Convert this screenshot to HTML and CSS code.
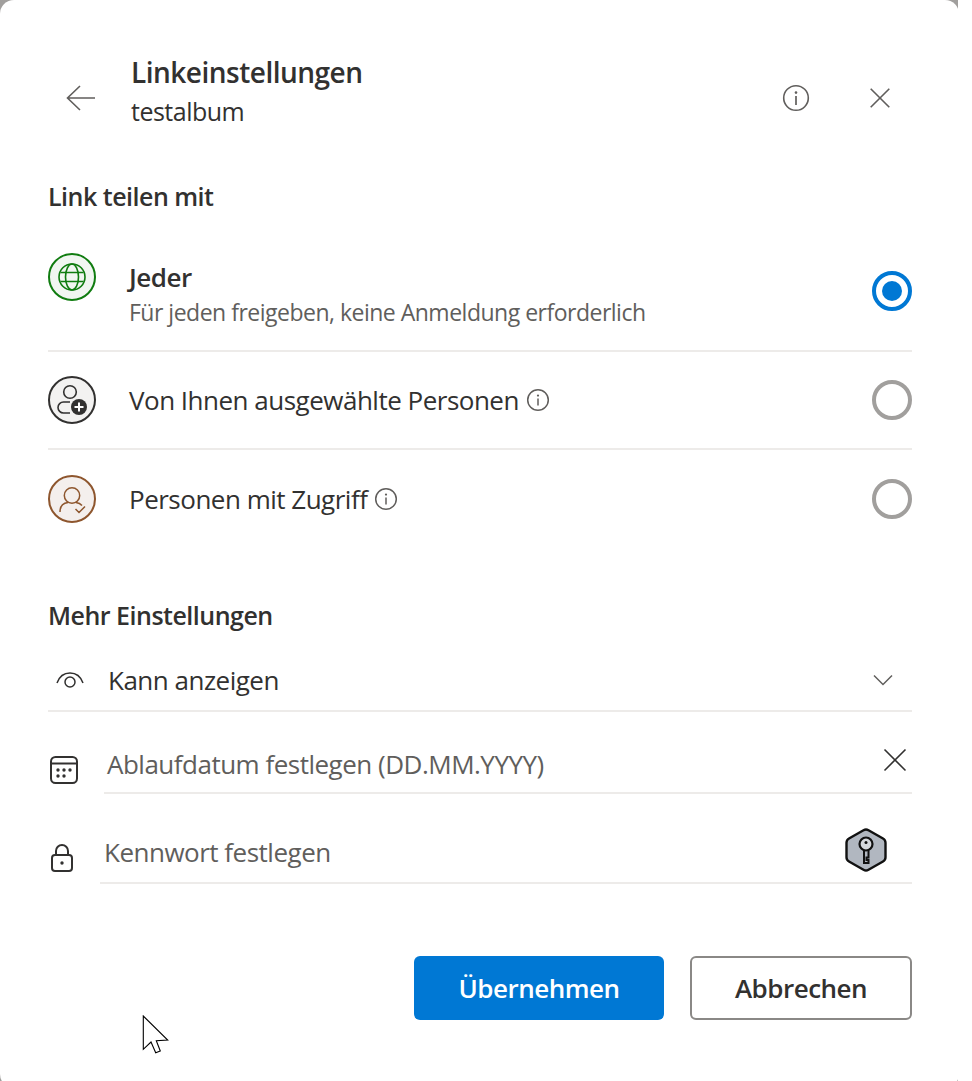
FILE: index.html
```html
<!DOCTYPE html>
<html lang="de">
<head>
    <meta charset="UTF-8">
    <meta name="viewport" content="width=device-width, initial-scale=1.0">
    <title>Linkeinstellungen</title>
    <link rel="stylesheet" href="styles.css">
</head>
<body>

<div class="backdrop">
    <div class="dialog">
        <div class="header">
            <svg class="back-icon" width="30" height="26" viewBox="0 0 30 26"><path d="M14 1 1.5 13 14 25M1.5 13H29" fill="none" stroke="#605e5c" stroke-width="1.6"/></svg>
            <div class="header-text">
                <div class="title">Linkeinstellungen</div>
                <div class="subtitle">testalbum</div>
            </div>
            <svg class="head-info" width="28" height="28" viewBox="0 0 28 28"><circle cx="14" cy="14" r="12.3" fill="none" stroke="#605e5c" stroke-width="1.6"/><circle cx="14" cy="8.6" r="1.3" fill="#605e5c"/><path d="M14 12v9" stroke="#605e5c" stroke-width="1.7"/></svg>
            <svg class="head-close" width="20" height="20" viewBox="0 0 20 20"><path d="M.7.7l18.6 18.6M19.3.7.7 19.3" stroke="#605e5c" stroke-width="1.6"/></svg>
        </div>

        <div class="section-title">Link teilen mit</div>

        <div class="option option-first">
            <div class="option-icon icon-green">
                <svg width="44" height="44" viewBox="0 0 44 44" fill="none" stroke="#107c10" stroke-width="1.6"><circle cx="22" cy="22" r="13"/><ellipse cx="22" cy="22" rx="6.5" ry="13"/><path d="M10.5 17.5h23M10.5 26.500h23"/></svg>
            </div>
            <div class="option-text">
                <div class="option-name">Jeder</div>
                <div class="option-desc">Für jeden freigeben, keine Anmeldung erforderlich</div>
            </div>
            <div class="radio radio-on"></div>
        </div>
        <div class="option">
            <div class="option-icon icon-dark">
                <svg width="44" height="44" viewBox="0 0 44 44" fill="none" stroke="#323130" stroke-width="1.6"><circle cx="20" cy="14" r="6.300"/><path d="M20 24h-6.500a5.500 5.500 0 0 0 0 11H20"/><circle cx="29" cy="29" r="8" fill="#323130" stroke="none"/><path d="M29 24.500v9M24.500 29h9" stroke="#fff" stroke-width="2"/></svg>
            </div>
            <div class="option-label">Von Ihnen ausgewählte Personen</div>
            <svg class="small-info" width="24" height="24" viewBox="0 0 24 24"><circle cx="12" cy="12" r="10.300" fill="none" stroke="#605e5c" stroke-width="1.500"/><circle cx="12" cy="7.600" r="1.100" fill="#605e5c"/><path d="M12 10.500v7" stroke="#605e5c" stroke-width="1.500"/></svg>
            <div class="radio"></div>
        </div>
        <div class="option option-last">
            <div class="option-icon icon-brown">
                <svg width="44" height="44" viewBox="0 0 44 44" fill="none" stroke="#8e562e" stroke-width="1.500"><circle cx="22" cy="18.500" r="7.700"/><path d="M10 35c0-6 3-9 8-9.500M26 25.500c2.500.3 4.500 1.200 6 3M25.500 32l3.500 3.500 6-6"/></svg>
            </div>
            <div class="option-label">Personen mit Zugriff</div>
            <svg class="small-info" width="24" height="24" viewBox="0 0 24 24"><circle cx="12" cy="12" r="10.300" fill="none" stroke="#605e5c" stroke-width="1.500"/><circle cx="12" cy="7.600" r="1.100" fill="#605e5c"/><path d="M12 10.500v7" stroke="#605e5c" stroke-width="1.500"/></svg>
            <div class="radio"></div>
        </div>

        <div class="section-title section-more">Mehr Einstellungen</div>

        <div class="permission">
            <svg class="eye-icon" width="28" height="18" viewBox="0 0 28 18" fill="none" stroke="#323130" stroke-width="1.500"><path d="M1 12C3.500 5 8 2 14 2s10.500 3 13 10"/><circle cx="14" cy="11" r="5"/></svg>
            <div class="permission-label">Kann anzeigen</div>
            <svg class="chevron" width="20" height="12" viewBox="0 0 20 12"><path d="M1 1.500l9 9 9-9" fill="none" stroke="#605e5c" stroke-width="1.500"/></svg>
        </div>

        <div class="field-row date-row">
            <svg class="calendar-icon" width="28" height="28" viewBox="0 0 28 28" fill="none"><rect x="1" y="1" width="26" height="26" rx="4.500" stroke="#323130" stroke-width="2"/><path d="M1 7.500h26" stroke="#323130" stroke-width="2"/><g fill="#323130"><circle cx="8" cy="14" r="1.700"/><circle cx="14" cy="14" r="1.700"/><circle cx="20" cy="14" r="1.700"/><circle cx="8" cy="20" r="1.700"/><circle cx="14" cy="20" r="1.700"/></g></svg>
            <div class="field date-field">
                <div class="field-text">Ablaufdatum festlegen (DD.MM.YYYY)</div>
                <svg class="clear-icon" width="24" height="24" viewBox="0 0 24 24"><path d="M1.500 1.500l21 21M22.500 1.500l-21 21" stroke="#323130" stroke-width="1.600"/></svg>
            </div>
        </div>

        <div class="field-row pass-row">
            <svg class="lock-icon" width="22" height="28" viewBox="0 0 22 28" fill="none" stroke="#323130" stroke-width="2"><rect x="1" y="11" width="20" height="16" rx="3"/><path d="M5 11V7a6 6 0 0 1 12 0v4"/><circle cx="11" cy="19" r="1.700" fill="#323130" stroke="none"/></svg>
            <div class="field pass-field">
                <div class="field-text">Kennwort festlegen</div>
                <svg class="key-icon" width="42" height="44" viewBox="0 0 42 44"><path d="M18.500 2.200a5 5 0 0 1 5 0l14.500 8.300a5 5 0 0 1 2.500 4.300v14.400a5 5 0 0 1-2.500 4.300l-14.500 8.300a5 5 0 0 1-5 0L4 33.500a5 5 0 0 1-2.500-4.300V14.800A5 5 0 0 1 4 10.500z" fill="#b1b7c0" stroke="#111" stroke-width="2.400"/><circle cx="21" cy="16" r="6.500" fill="#d5d8dd" stroke="#111" stroke-width="2.200"/><circle cx="21" cy="14.500" r="1.500" fill="#111"/><path d="M19 22.500v12.500h4.500v-3h-2v-2.500h2v-7" fill="none" stroke="#111" stroke-width="2"/></svg>
            </div>
        </div>

        <div class="buttons">
            <button class="btn btn-primary">Übernehmen</button>
            <button class="btn btn-cancel">Abbrechen</button>
        </div>
    </div>
    <svg class="cursor" width="28" height="40" viewBox="0 0 28 40"><path d="M1.300 1v33.300L9 27l4.700 10.700 4.600-1.700-4-10.300 11.400-.7z" fill="#fff" stroke="#000" stroke-width="1.100"/></svg>
</div>

</body>
</html>
```

FILE: styles.css
```css
body {
    margin: 0;
    height: 1081px;
    overflow: hidden;
    background-color: white;
    font-family: "Open Sans", "Noto Sans", sans-serif;
    color: #323130;
}
.backdrop {
    position: relative;
    width: 958px;
    height: 1081px;
    overflow: hidden;
    background-color: #a19f9d;
}
.dialog {
    box-sizing: border-box;
    width: 959px;
    height: 1088px;
    padding: 52px 47px 0 48px;
    background: white;
    border-radius: 14px;
}

/* header */
.header {
    display: flex;
    align-items: center;
    height: 78px;
    margin-bottom: 48px;
}
.back-icon {
    margin-left: 18px;
    margin-top: 14px;
}
.header-text {
    margin-left: 35px;
    flex: 1;
}
.title {
    font-size: 28px;
    font-weight: 600;
    line-height: 40px;
    letter-spacing: -0.5px;
}
.subtitle {
    font-size: 25px;
    line-height: 38px;
    letter-spacing: -0.5px;
}
.head-info {
    margin-top: 14px;
    margin-right: 60px;
}
.head-close {
    margin-top: 14px;
    margin-right: 22px;
}

.section-title {
    font-size: 25px;
    font-weight: 600;
    line-height: 36px;
    letter-spacing: -0.5px;
}
.section-more {
    margin-top: 49px;
}

/* share options */
.option {
    box-sizing: border-box;
    display: flex;
    align-items: center;
    height: 98px;
    border-bottom: 2px solid #edebe9;
}
.option-first {
    align-items: flex-start;
    height: 138px;
    padding-top: 39px;
}
.option-last {
    border-bottom: none;
}
.option-icon {
    box-sizing: border-box;
    display: flex;
    align-items: center;
    justify-content: center;
    flex: none;
    width: 48px;
    height: 48px;
    border: 2px solid;
    border-radius: 50%;
}
.icon-green {
    border-color: #107c10;
    background-color: #f1f6f1;
}
.icon-dark {
    border-color: #323130;
    background-color: #f3f2f1;
}
.icon-brown {
    border-color: #8e562e;
    background-color: #f4efed;
}
.option-text {
    flex: 1;
    margin-left: 33px;
    margin-top: 5px;
}
.option-name {
    font-size: 26px;
    font-weight: 600;
    line-height: 38px;
    letter-spacing: -0.5px;
}
.option-desc {
    font-size: 23px;
    line-height: 32px;
    color: #605e5c;
    letter-spacing: -0.5px;
}
.option-label {
    margin-left: 33px;
    font-size: 26px;
    line-height: 36px;
    letter-spacing: -0.5px;
}
.small-info {
    margin-left: 7px;
    margin-right: auto;
}
.radio {
    box-sizing: border-box;
    flex: none;
    width: 40px;
    height: 40px;
    border: 4px solid #a19f9d;
    border-radius: 50%;
    background: white;
}
.radio-on {
    display: flex;
    align-items: center;
    justify-content: center;
    margin-top: 18px;
    border-color: #0078d4;
}
.radio-on::after {
    content: "";
    width: 20px;
    height: 20px;
    border-radius: 50%;
    background-color: #0078d4;
}

/* more settings */
.permission {
    box-sizing: border-box;
    display: flex;
    align-items: center;
    height: 79px;
    padding: 17px 19px 0 8px;
    border-bottom: 2px solid #edebe9;
}
.eye-icon {
    flex: none;
}
.permission-label {
    flex: 1;
    margin-left: 24px;
    font-size: 26px;
    line-height: 36px;
    letter-spacing: -0.5px;
}
.field-row {
    display: flex;
    align-items: flex-end;
}
.date-row {
    height: 82px;
}
.pass-row {
    height: 90px;
}
.calendar-icon {
    flex: none;
    margin-left: 2px;
    margin-bottom: 10px;
}
.lock-icon {
    flex: none;
    margin-left: 3px;
    margin-bottom: 12px;
}
.field {
    box-sizing: border-box;
    display: flex;
    flex: 1;
    align-items: flex-end;
    justify-content: space-between;
    height: 100%;
    border-bottom: 2px solid #edebe9;
}
.date-field {
    margin-left: 26px;
    padding-left: 3px;
    padding-bottom: 10px;
}
.pass-field {
    margin-left: 27px;
    padding-left: 4px;
    padding-bottom: 12px;
}
.field-text {
    font-size: 26px;
    line-height: 36px;
    color: #605e5c;
    letter-spacing: -0.5px;
}
.clear-icon {
    margin-right: 5px;
    margin-bottom: 10px;
}
.key-icon {
    margin-right: 25px;
    margin-bottom: -2px;
}

/* buttons */
.buttons {
    display: flex;
    justify-content: flex-end;
    gap: 26px;
    margin-top: 72px;
}
.btn {
    box-sizing: border-box;
    height: 64px;
    border-radius: 6px;
    font-family: inherit;
    font-size: 26px;
    font-weight: 600;
    letter-spacing: -0.5px;
    cursor: pointer;
}
.btn-primary {
    width: 250px;
    border: none;
    background-color: #0078d4;
    color: white;
}
.btn-cancel {
    width: 222px;
    border: 2px solid #8a8886;
    background-color: white;
    color: #323130;
}

/* mouse pointer in the shot */
.cursor {
    position: absolute;
    left: 142px;
    top: 1015px;
}
```
